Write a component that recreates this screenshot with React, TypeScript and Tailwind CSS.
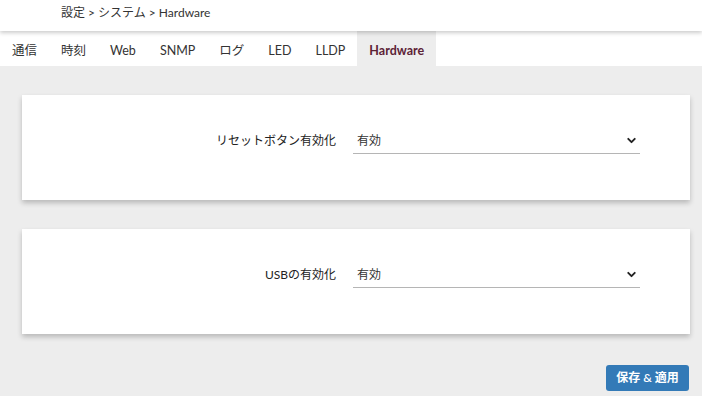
import { ChevronDown } from "lucide-react";

const tabs = ["通信", "時刻", "Web", "SNMP", "ログ", "LED", "LLDP", "Hardware"];

const font = {
	fontFamily: 'Lato, "Noto Sans CJK JP", sans-serif',
};

function SettingCard({ label, value }: { label: string; value: string }) {
	return (
		<div className="bg-white h-[105px] flex items-center pb-[13px] shadow-[0_3px_5px_rgba(0,0,0,0.22)]">
			<div className="w-[314px] text-right text-[12px] text-[#222]">{label}</div>
			<div className="ml-[17px] w-[287px] h-[26px] flex items-center justify-between border-b border-[#b5b5b5] pl-[4px] pr-[2px]">
				<span className="text-[12px] text-[#333]">{value}</span>
				<ChevronDown size={13} strokeWidth={3.5} className="text-[#222]" />
			</div>
		</div>
	);
}

export default function App() {
	return (
		<div className="w-[702px] h-[396px] bg-[#ededed] overflow-hidden" style={font}>
			<div className="relative z-10 h-[31px] bg-white flex items-center pl-[61px] shadow-[0_2px_4px_rgba(0,0,0,0.2)]">
				<span className="text-[12px] text-[#333] mt-[-6px]">設定 &gt; システム &gt; Hardware</span>
			</div>
			<div className="h-[35px] bg-white flex">
				{tabs.map((t) =>
					t === "Hardware" ? (
						<div key={t} className="px-3 pt-[6px] flex items-center bg-[#ededed] text-[12.5px] font-bold text-[#5c2236]">
							{t}
						</div>
					) : (
						<div key={t} className="px-3 pt-[6px] flex items-center text-[12.5px] text-[#333]">
							{t}
						</div>
					),
				)}
			</div>
			<div className="pl-[22px] pr-[12px] pt-[29px] flex flex-col gap-[29px]">
				<SettingCard label="リセットボタン有効化" value="有効" />
				<SettingCard label="USBの有効化" value="有効" />
			</div>
			<div className="flex justify-end pr-[13px] mt-[31px]">
				<button className="w-[83px] h-[26px] rounded-[3px] bg-[#337ab7] text-white text-[12px] font-semibold">
					保存 &amp; 適用
				</button>
			</div>
		</div>
	);
}
